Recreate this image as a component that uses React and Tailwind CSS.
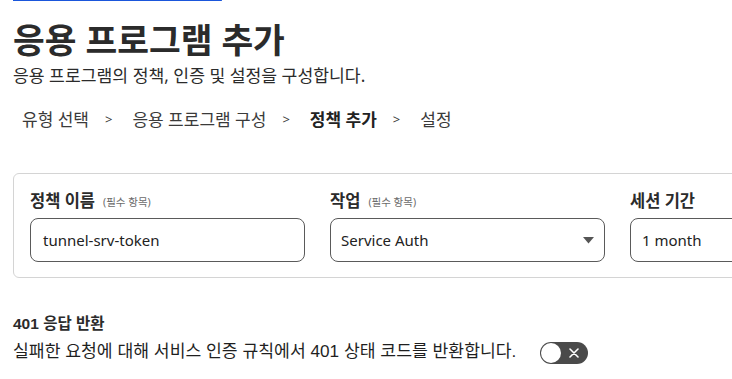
import React from "react";

const F = { fontFamily: '"Noto Sans", "Noto Sans CJK KR", sans-serif' };

function Field({ label, required, children, width = "w-[275px]" }) {
  return (
    <div className={`${width} shrink-0 flex flex-col`}>
      <div className="h-[24px] mb-[5px] flex items-center gap-[8px] whitespace-nowrap">
        <span className="text-[16.5px] font-bold text-[#2b2b2b]">{label}</span>
        {required && <span className="text-[10.5px] text-[#6b6b6b] mt-[3px]">(필수 항목)</span>}
      </div>
      {children}
    </div>
  );
}

function Sep() {
  return <span className="ml-[16px] mr-[20px] text-[13px] text-[#3a3a3a]">&gt;</span>;
}

export default function App() {
  return (
    <div className="w-[732px] h-[379px] overflow-hidden bg-white text-[#2b2b2b]" style={F}>
      <div className="pl-[13px]">
        <div className="h-[3px] overflow-hidden">
          <a className="block w-fit mt-[-16px] text-[14px] leading-[20px] text-[#1a56db] underline whitespace-nowrap">
            ← 응용 프로그램 목록으로 돌아가기
          </a>
        </div>
        <h1 className="text-[34.5px] font-bold leading-[50px] mt-[12px] text-[#2b2b2b]">응용 프로그램 추가</h1>
        <p className="text-[17.2px] leading-[22px] mt-0 text-[#2b2b2b]">응용 프로그램의 정책, 인증 및 설정을 구성합니다.</p>
        <div className="flex items-center mt-[21px] h-[24px] text-[17px] text-[#3a3a3a] whitespace-nowrap">
          <span className="ml-[9px]">유형 선택</span>
          <Sep />
          <span>응용 프로그램 구성</span>
          <Sep />
          <span className="font-bold text-[#222]">정책 추가</span>
          <Sep />
          <span>설정</span>
        </div>
      </div>

      <div className="ml-[13px] mt-[41px] w-[740px] border border-[#d4d4d4] rounded-[6px] pt-[15px] pb-[15px] pl-[16px] flex gap-[25px]">
        <Field label="정책 이름" required>
          <div className="h-[44px] border border-[#5a5a5a] rounded-[8px] flex items-center pl-[12px] text-[15px] text-[#222]">
            tunnel-srv-token
          </div>
        </Field>
        <Field label="작업" required>
          <div className="h-[44px] border border-[#5a5a5a] rounded-[8px] flex items-center justify-between pl-[10px] pr-[10px] text-[15px] text-[#222]">
            <span>Service Auth</span>
            <svg width="11" height="7" viewBox="0 0 11 7"><path d="M0 0 L11 0 L5.5 6.5 Z" fill="#555" /></svg>
          </div>
        </Field>
        <Field label="세션 기간">
          <div className="h-[44px] border border-[#5a5a5a] rounded-[8px] flex items-center pl-[11px] text-[15px] text-[#222]">
            1 month
          </div>
        </Field>
      </div>

      <div className="pl-[13px] mt-[35px]" style={{ fontFamily: '"Liberation Sans", "Noto Sans CJK KR", sans-serif' }}>
        <div className="h-[22px] leading-[22px] whitespace-nowrap text-[15.5px] font-bold text-[#2b2b2b]">401 응답 반환</div>
        <div className="flex items-center mt-[4px] h-[26px]">
          <span className="whitespace-nowrap text-[17.2px] text-[#1f1f1f]">실패한 요청에 대해 서비스 인증 규칙에서 401 상태 코드를 반환합니다.</span>
          <div className="ml-[24px] mt-[2px] w-[48px] h-[22px] rounded-full bg-[#4a4a4a] relative shrink-0">
            <div className="absolute left-[1px] top-[1px] w-[20px] h-[20px] rounded-full bg-white" />
            <svg className="absolute right-[9px] top-[6px]" width="10" height="10" viewBox="0 0 10 10">
              <path d="M1 1 L9 9 M9 1 L1 9" stroke="white" strokeWidth="1.6" strokeLinecap="round" />
            </svg>
          </div>
        </div>
      </div>
    </div>
  );
}
